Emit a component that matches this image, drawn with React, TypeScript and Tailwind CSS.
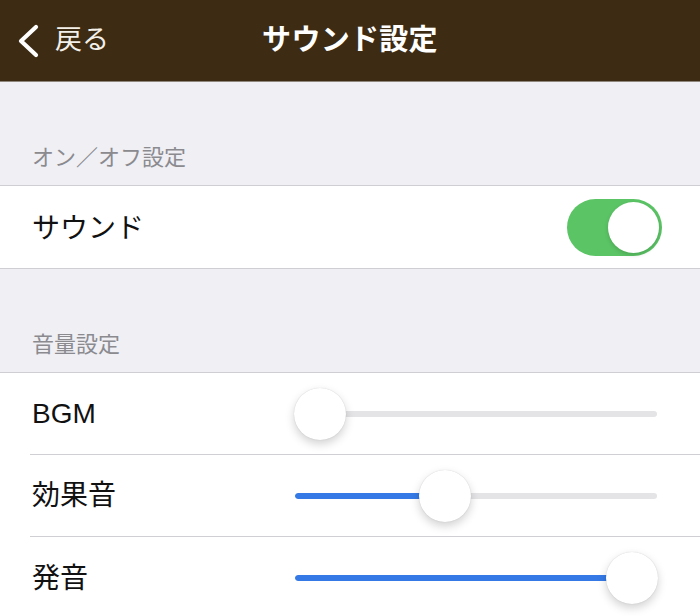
import React from 'react';

const font = { fontFamily: '"Liberation Sans", "Noto Sans CJK JP", sans-serif' };

const SectionHeader = ({ label }: { label: string }) => (
  <div className="h-[103px] flex items-end px-[32px] pb-[11px] text-[22px] text-[#8a8a8f]">
    {label}
  </div>
);

const VolumeSlider = ({ value }: { value: number }) => {
  // thumb center travels between 25px and 337px of a 362px track
  const center = 25 + value * 312;
  return (
    <div className="relative w-[362px] h-[52px] flex items-center">
      <div className="w-full h-[6px] rounded-full bg-[#e4e4e6] overflow-hidden">
        <div className="h-full bg-[#3479e6] rounded-full" style={{ width: value === 0 ? 0 : center }} />
      </div>
      <div
        className="absolute top-0 w-[52px] h-[52px] rounded-full bg-white shadow-[0_4px_10px_rgba(0,0,0,0.18),0_0_1px_rgba(0,0,0,0.2)]"
        style={{ left: center - 26 }}
      />
    </div>
  );
};

const SliderRow = ({ label, value, last }: { label: string; value: number; last?: boolean }) => (
  <div className="pl-[30px]">
    <div className={`h-[82px] flex items-center pr-[43px] ${last ? '' : 'border-b border-[#d0d0d4]'}`}>
      <span className="pl-[2px] pt-[1px] text-[28px] text-[#111] flex-1">{label}</span>
      <VolumeSlider value={value} />
    </div>
  </div>
);

export default function App() {
  return (
    <div className="w-[700px] h-[616px] overflow-hidden bg-[#efeff4]" style={font}>
      <header className="h-[82px] bg-[#3d2b14] border-b border-[#8f877c] grid grid-cols-[1fr_auto_1fr] items-center text-white">
        <div className="flex items-center gap-[14px] pl-[14px]">
          <svg width="27" height="34" viewBox="0 0 27 34" fill="none">
            <path d="M22 3 L7 17 L22 31" stroke="white" strokeWidth="4.2" strokeLinecap="round" strokeLinejoin="round" />
          </svg>
          <span className="text-[27px] text-[#f3efe9]">戻る</span>
        </div>
        <h1 className="text-[29px] font-bold tracking-[0.3px] pt-[1px]">サウンド設定</h1>
        <div />
      </header>

      <SectionHeader label="オン／オフ設定" />
      <div className="bg-white border-y border-[#cfcfd3] h-[84px] flex items-center justify-between pl-[32px] pr-[38px]">
        <span className="text-[28px] text-[#111] pt-[3px]">サウンド</span>
        <div className="w-[95px] h-[57px] rounded-full bg-[#5bc465] flex items-center justify-end pr-[3px]">
          <div className="w-[51px] h-[51px] rounded-full bg-white shadow-[0_2px_4px_rgba(0,0,0,0.15)]" />
        </div>
      </div>

      <SectionHeader label="音量設定" />
      <div className="bg-white border-t border-[#cfcfd3]">
        <SliderRow label="BGM" value={0} />
        <SliderRow label="効果音" value={0.4} />
        <SliderRow label="発音" value={1} last />
      </div>
    </div>
  );
}
